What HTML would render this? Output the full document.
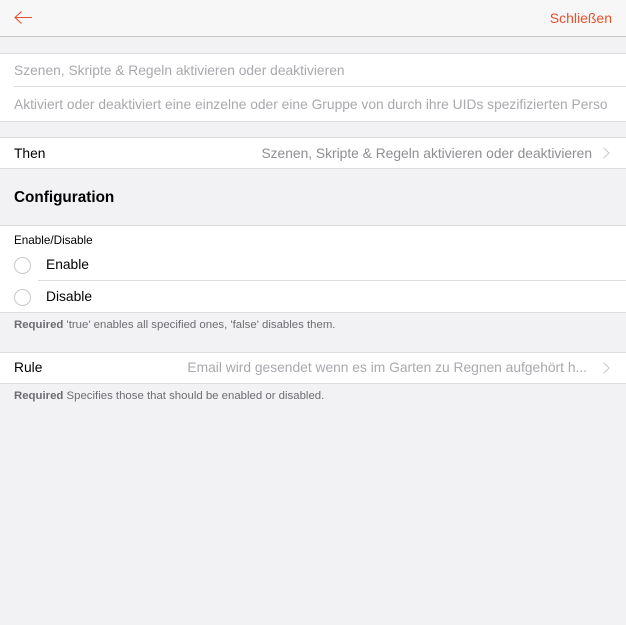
<!DOCTYPE html><html><head><style>
body{margin:0;width:626px;height:625px;background:#f2f2f4;font-family:"Liberation Sans",sans-serif;position:relative;overflow:hidden;color:#000}
.a{position:absolute}
.w{position:absolute;left:0;width:626px;background:#fff;border-top:1px solid #ddd;border-bottom:1px solid #ddd}
.t{position:absolute;white-space:nowrap;font-size:13.8px;line-height:16px}
.g{color:#a9a9ae}
.chev{position:absolute;width:7px;height:7px;border-top:1.5px solid #c7c7cc;border-right:1.5px solid #c7c7cc;transform:rotate(45deg)}
.r{position:absolute;left:14px;width:15px;height:15px;border:1px solid #c7c7cc;border-radius:50%}
.f{position:absolute;left:14px;font-size:11.4px;color:#6d6d72;white-space:nowrap}
</style></head><body>
<div class="a" style="left:0;top:0;width:626px;height:36px;background:#f7f7f8;border-bottom:1px solid #c4c4c4"></div>
<svg class="a" style="left:13px;top:10px" width="20" height="16"><path d="M19 7.5H2M8.5 1.5L2 7.5l6.5 6" fill="none" stroke="#e5502d" stroke-width="1.1"/></svg>
<div class="t" style="right:14px;top:10px;color:#e5502d;font-size:14px">Schließen</div>

<div class="w" style="top:53px;height:67px"></div>
<div class="t g" style="left:14px;top:63px">Szenen, Skripte &amp; Regeln aktivieren oder deaktivieren</div>
<div class="a" style="left:14px;top:86px;width:612px;height:1px;background:#ddd"></div>
<div class="t g" style="left:14px;top:97px">Aktiviert oder deaktiviert eine einzelne oder eine Gruppe von durch ihre UIDs spezifizierten Perso</div>

<div class="w" style="top:137px;height:30px"></div>
<div class="t" style="left:14px;top:146px">Then</div>
<div class="t" style="right:34px;top:146px;color:#8e8e93">Szenen, Skripte &amp; Regeln aktivieren oder deaktivieren</div>
<div class="chev" style="left:600px;top:149px"></div>

<div class="t" style="left:14px;top:189px;font-size:15.3px;font-weight:bold;line-height:18px">Configuration</div>

<div class="w" style="top:225px;height:86px"></div>
<div class="t" style="left:14px;top:234px;font-size:11.7px;line-height:13px">Enable/Disable</div>
<div class="r" style="top:257px"></div>
<div class="t" style="left:46px;top:257px">Enable</div>
<div class="a" style="left:38px;top:280px;width:588px;height:1px;background:#ddd"></div>
<div class="r" style="top:289px"></div>
<div class="t" style="left:46px;top:289px">Disable</div>
<div class="f" style="top:319px"><b>Required</b> 'true' enables all specified ones, 'false' disables them.</div>

<div class="w" style="top:352px;height:30px"></div>
<div class="t" style="left:14px;top:360px">Rule</div>
<div class="t" style="right:39px;top:360px;color:#a9a9ae">Email wird gesendet wenn es im Garten zu Regnen aufgehört h...</div>
<div class="chev" style="left:600px;top:364px"></div>
<div class="f" style="top:390px"><b>Required</b> Specifies those that should be enabled or disabled.</div>
</body></html>
